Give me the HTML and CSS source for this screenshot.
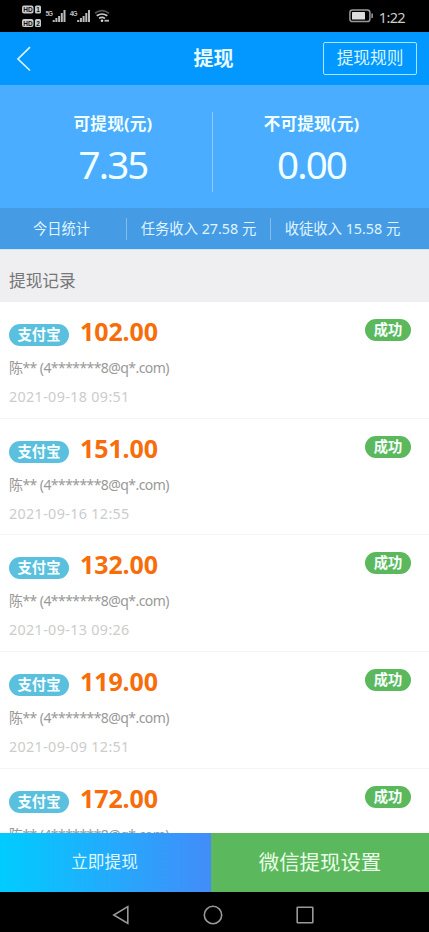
FILE: index.html
```html
<!DOCTYPE html>
<html lang="zh-CN">
<head>
<meta charset="utf-8">
<meta name="viewport" content="width=device-width, initial-scale=1">
<title>提现</title>
<link rel="stylesheet" href="styles.css">
</head>
<body>
<div class="screen">
  <div class="status">
    <svg class="signals" width="100" height="32" viewBox="0 0 100 32" aria-hidden="true">
      <g fill="#ccc">
        <rect x="7" y="5.5" width="11.5" height="8" rx="2"/><rect x="20" y="5.5" width="6" height="8" rx="1.5"/>
        <rect x="7" y="19" width="11.5" height="8" rx="2"/><rect x="20" y="19" width="6" height="8" rx="1.5"/>
      </g>
      <g class="tiny-dark"><text x="8.2" y="12">HD</text><text x="21.3" y="12">1</text><text x="8.2" y="25.5">HD</text><text x="21.3" y="25.5">2</text></g>
      <g class="tiny-light"><text x="30.5" y="15.5">5G</text><text x="54.8" y="15.5">4G</text></g>
      <g fill="#bbb">
        <path d="M37.7 20h2v2h-2zM40.4 18h2v4h-2zM43.1 16h2v6h-2zM45.8 13h2v9h-2zM48.5 10h2v12h-2z"/>
        <path d="M62.2 20h2v2h-2zM64.9 18h2v4h-2zM67.6 16h2v6h-2zM70.3 13h2v9h-2zM73 10h2v12h-2z"/>
      </g>
      <g fill="none" stroke-width="1.7">
        <path stroke="#555" d="M80 13.2q7-5 14 0"/><path stroke="#ccc" d="M81.7 15.8q5.3-3.6 10.6 0M84 18.4q3-2 6 0"/>
      </g>
      <circle cx="87" cy="20.7" r="1.3" fill="#ddd"/><path d="M89.5 20.7h4.5" stroke="#bbb" stroke-width="1.8"/>
    </svg>
    <div class="status-right">
      <svg width="24" height="14" viewBox="0 0 24 14" aria-hidden="true"><rect x=".9" y="1" width="20" height="11.6" rx="2.6" fill="none" stroke="#999" stroke-width="1.5"/><rect x="3" y="3" width="13" height="7.6" rx=".7" fill="#ddd"/><path d="M23.1 4.5v4.6" stroke="#aaa" stroke-width="1.4"/></svg>
      <span class="clock">1:22</span>
    </div>
  </div>
  <header class="bar">
    <svg class="back" width="16" height="26" viewBox="0 0 16 26" aria-hidden="true"><path d="M14 1.2 2 13l12 11.5" fill="none" stroke="#d8f3ff" stroke-width="1.7"/></svg>
    <h1>提现</h1>
    <button class="rules">提现规则</button>
  </header>
  <section class="balances">
    <div class="balance"><div class="label">可提现(元)</div><div class="value">7.35</div></div>
    <div class="balance right"><div class="label">不可提现(元)</div><div class="value">0.00</div></div>
  </section>
  <section class="today">
    <div>今日统计</div><div>任务收入 27.58 元</div><div>收徒收入 15.58 元</div>
  </section>
  <h2>提现记录</h2>
  <main class="list">
    <article><div class="top"><span class="pill">支付宝</span><b>102.00</b><span class="pill ok">成功</span></div><p class="who">陈** (4*******8@q*.com)</p><p class="when">2021-09-18 09:51</p></article>
    <article><div class="top"><span class="pill">支付宝</span><b>151.00</b><span class="pill ok">成功</span></div><p class="who">陈** (4*******8@q*.com)</p><p class="when">2021-09-16 12:55</p></article>
    <article><div class="top"><span class="pill">支付宝</span><b>132.00</b><span class="pill ok">成功</span></div><p class="who">陈** (4*******8@q*.com)</p><p class="when">2021-09-13 09:26</p></article>
    <article><div class="top"><span class="pill">支付宝</span><b>119.00</b><span class="pill ok">成功</span></div><p class="who">陈** (4*******8@q*.com)</p><p class="when">2021-09-09 12:51</p></article>
    <article><div class="top"><span class="pill">支付宝</span><b>172.00</b><span class="pill ok">成功</span></div><p class="who">陈** (4*******8@q*.com)</p></article>
  </main>
  <div class="actions"><button class="now">立即提现</button><button class="wechat">微信提现设置</button></div>
  <nav>
    <svg width="18" height="20" viewBox="0 0 18 20" aria-hidden="true"><path d="M15.8 1.6v16.8L1.8 10z"/></svg>
    <svg width="20" height="20" viewBox="0 0 20 20" aria-hidden="true"><circle cx="10" cy="10" r="8.7"/></svg>
    <svg width="18" height="18" viewBox="0 0 18 18" aria-hidden="true"><rect x="1.2" y="1.2" width="15.6" height="15.6" rx=".6"/></svg>
  </nav>
</div>
</body>
</html>
```
FILE: styles.css
```css
* { box-sizing: border-box; }
body { margin: 0; background: #000; font-family: "Noto Sans", "Noto Sans CJK SC", sans-serif; }
h1, h2, p { margin: 0; font-weight: 400; }
button { border: 0; padding: 0; font-family: inherit; color: #fff; }
.screen { width: 429px; height: 932px; display: flex; flex-direction: column; overflow: hidden; }
.screen > * { flex-shrink: 0; }

.status { height: 32px; display: flex; justify-content: space-between; padding: 0 24px 0 15px; background: #000; }
.status-right { display: flex; align-items: center; gap: 6px; color: #ccc; }
.clock { font-size: 14.5px; line-height: 32px; padding-top: 2px; letter-spacing: -.65px; }
.tiny-dark, .tiny-light { font: bold 6.5px "Liberation Sans", sans-serif; }
.tiny-dark { fill: #111; }
.tiny-light { fill: #bbb; font-size: 6.5px; letter-spacing: -1px; }

.bar { height: 53px; display: grid; grid-template-columns: 1fr auto 1fr; align-items: center; padding: 0 12px 0 16px; background: #0398ff; color: #e8faff; }
.bar h1 { font-size: 20px; line-height: 28px; font-weight: 700; padding-right: 6px; }
.rules { justify-self: end; width: 94px; height: 33px; border: 1.5px solid #a9e5ff; border-radius: 2px; background: none; color: #d8f5ff; font-size: 16.7px; line-height: 28px; padding-bottom: 2px; }

.balances { height: 123px; display: grid; grid-template-columns: 213px 1fr; background: #4aadff; padding: 27px 0 17px; }
.balance { text-align: center; color: #f2ffff; padding-left: 14px; border-right: 1px solid #8ccaff; }
.right { padding: 0 19px 0 0; border: 0; }
.label { font-size: 16.6px; line-height: 24px; font-weight: 700; letter-spacing: .2px; }
.value { font-size: 38.5px; line-height: 55px; letter-spacing: -1.9px; padding-top: 1px; }

.today { height: 41px; display: grid; grid-template-columns: 126px 144px 1fr; align-items: center; background: #469be5; color: #dff5ff; font-size: 14.3px; line-height: 22px; text-align: center; }
.today div + div { border-left: 1px solid #81bdf0; }
.today div:first-child { padding-right: 3px; }
.today div:last-child { padding-right: 15px; }

h2 { height: 53px; padding: 3px 9px 0; background: #efeff2; border-top: 1px solid #cfe8fa; color: #777; font-size: 16.7px; line-height: 55px; }

.list { height: 531px; background: #fff; overflow: hidden; }
article { height: 116.7px; padding: 14px 18px 0 9px; border-bottom: 1px solid #f5f5f5; }
.top { display: flex; height: 32px; align-items: flex-start; }
.pill { width: 60px; height: 22px; border-radius: 11px; margin-top: 8px; background: #5bc0de; color: #f7ffff; text-align: center; font-size: 14.3px; line-height: 21px; font-weight: 700; }
.top b { margin-left: 11px; color: #f76d0a; font-size: 25px; line-height: 31px; letter-spacing: -.1px; }
.ok { width: 46px; margin: 3px 0 0 auto; background: #5cb85c; }
.who { margin-top: 9px; color: #999; font-size: 14px; line-height: 22px; letter-spacing: -.57px; }
.when { margin-top: 7px; color: #ccc; font-size: 14.3px; line-height: 22px; letter-spacing: .36px; }

.actions { height: 59px; display: grid; grid-template-columns: 211px 1fr; }
.actions button { padding-bottom: 4px; }
.now { background: linear-gradient(90deg, #00ccff, #438cf9); color: #dcf8ff; font-size: 16.7px; padding-right: 2px; }
.wechat { background: #5cb85c; color: #e9ffe9; font-size: 20.4px; }
nav { height: 41px; display: flex; align-items: center; justify-content: center; gap: 73px; padding: 5px 4px 0 0; background: #000; }
nav svg { fill: none; stroke: #999; stroke-width: 1.6; }
```
